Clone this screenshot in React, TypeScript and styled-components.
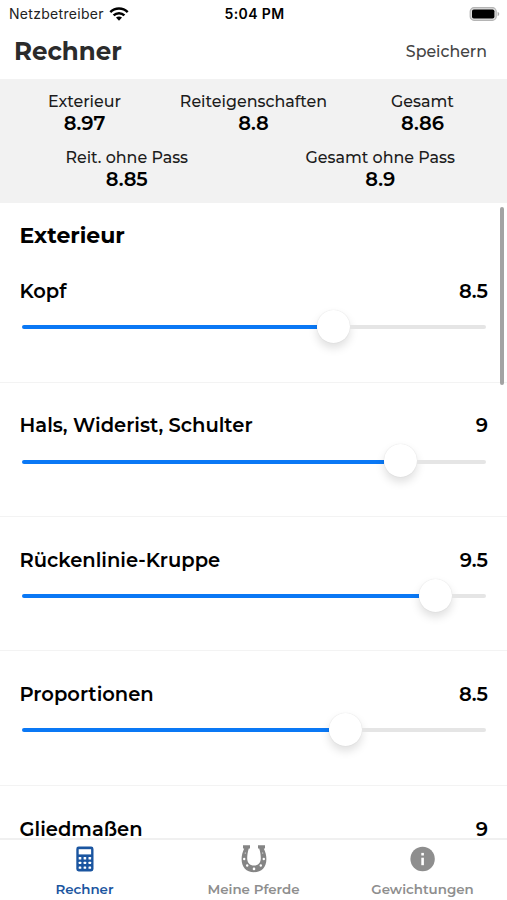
import React from 'react';
import styled, { createGlobalStyle } from 'styled-components';

const GlobalStyle = createGlobalStyle`
  * { box-sizing: border-box; }
  body {
    margin: 0;
    background: #fff;
    color: #000;
    font-family: Montserrat, Inter, sans-serif;
  }
`;

const Screen = styled.div`
  display: flex;
  flex-direction: column;
  width: 507px;
  height: 900px;
  overflow: hidden;
  background: #fff;
`;

const StatusBar = styled.div`
  display: grid;
  grid-template-columns: 1fr auto 1fr;
  align-items: center;
  flex: none;
  height: 27px;
  padding: 0 7px 0 9px;
  font-family: Inter, sans-serif;
  font-size: 14px;
`;

const Carrier = styled.div`
  display: flex;
  align-items: center;
  gap: 5px;
  color: #222;
  letter-spacing: 0.3px;
`;

const Clock = styled.div`
  font-weight: 600;
  letter-spacing: 0.4px;
`;

const BatterySlot = styled.div`
  display: flex;
  justify-content: flex-end;
`;

const Header = styled.header`
  display: flex;
  align-items: center;
  justify-content: space-between;
  flex: none;
  height: 52px;
  padding: 0 20px 5px 14px;
`;

const Title = styled.h1`
  margin: 0;
  font-size: 24.5px;
  font-weight: 700;
  line-height: 30px;
  color: #2b2b2b;
`;

const SaveButton = styled.button`
  padding: 3px 0 0;
  border: 0;
  background: none;
  font: 500 15.8px/20px Montserrat, Inter, sans-serif;
  color: #444;
`;

const Summary = styled.section`
  display: flex;
  flex-direction: column;
  flex: none;
  gap: 13px;
  height: 124px;
  padding-top: 13px;
  background: #f2f2f2;
`;

const SummaryRow = styled.div`
  display: flex;
`;

const Score = styled.div`
  flex: 1 1 0;
  text-align: center;
`;

const ScoreLabel = styled.div`
  font-size: 15.9px;
  font-weight: 500;
  line-height: 20px;
  color: #1c1c1c;
  white-space: nowrap;
`;

const ScoreValue = styled.div`
  font-size: 19.5px;
  font-weight: 600;
  line-height: 23px;
`;

const ScrollArea = styled.main`
  position: relative;
  flex: 1;
  min-height: 0;
  overflow: hidden;
`;

const ScrollThumb = styled.div`
  position: absolute;
  top: 4px;
  right: 3px;
  width: 4px;
  height: 178px;
  border-radius: 2px;
  background: #a3a3a3;
`;

const SectionTitle = styled.h2`
  margin: 0;
  height: 45.3px;
  padding: 19px 19.5px 0;
  font-size: 22px;
  font-weight: 700;
  line-height: 28px;
`;

const Criterion = styled.div`
  height: 134.4px;
  padding: 30.7px 19px 0 19.5px;
  border-bottom: 1px solid #f3f3f3;
`;

const CriterionHead = styled.div`
  display: flex;
  justify-content: space-between;
  font-size: 19.5px;
  font-weight: 600;
  line-height: 24px;
`;

const Slider = styled.div`
  display: flex;
  align-items: center;
  height: 34px;
  margin: 7.3px 2px 0 2.5px;
`;

const TrackFill = styled.div`
  height: 4px;
  border-radius: 2px 0 0 2px;
  background: #0a78f5;
`;

const TrackRest = styled.div`
  flex: 1;
  height: 4px;
  border-radius: 0 2px 2px 0;
  background: #e5e5e5;
`;

const Knob = styled.div`
  flex: none;
  width: 33px;
  height: 33px;
  margin-bottom: 2px;
  border-radius: 50%;
  background: #fff;
  box-shadow: 0 0 1px rgba(0, 0, 0, 0.15), 0 5px 10px rgba(0, 0, 0, 0.13);
`;

const TabBar = styled.nav`
  display: flex;
  flex: none;
  height: 62px;
  border-top: 2px solid #f0f0f0;
  background: #fff;
`;

const Tab = styled.div<{ $active?: boolean }>`
  display: flex;
  flex: 1 1 0;
  flex-direction: column;
  align-items: center;
  gap: 7px;
  padding-top: 4px;
  font-size: 13.4px;
  font-weight: 600;
  line-height: 16px;
  color: ${(p) => (p.$active ? '#1a55a0' : '#8e8e8e')};
`;

const WifiIcon = () => (
  <svg width="20" height="14" viewBox="0 0 20 14" fill="none" stroke="#000" strokeWidth="2.5">
    <path d="M1.3 5.1C6.2.4 13.8.4 18.7 5.1" />
    <path d="M4.6 8.4c3-2.9 7.8-2.9 10.8 0" />
    <path d="M10 13.7 7 10.6c1.7-1.6 4.3-1.6 6 0z" fill="#000" stroke="none" />
  </svg>
);

const BatteryIcon = () => (
  <svg width="31" height="14" viewBox="0 0 31 14">
    <rect x="1.2" y="0.7" width="26" height="12.6" rx="3.8" fill="#ddd" stroke="#b4b4b4" strokeWidth="1.2" />
    <rect x="3" y="2.4" width="22.4" height="9.2" rx="1.8" fill="#000" />
    <path d="M28.6 4.8c2.2.8 2.2 3.6 0 4.4z" fill="#aaa" />
  </svg>
);

const CalculatorIcon = () => (
  <svg width="30" height="30" viewBox="0 0 30 30">
    <rect x="6.3" y="2.5" width="17.2" height="25" rx="2.4" fill="#1a55a0" />
    <g fill="#fff">
      <rect x="8.7" y="5.2" width="12.4" height="5.2" />
      <rect x="8.7" y="13" width="2.6" height="2.4" rx="0.5" />
      <rect x="13.6" y="13" width="2.6" height="2.4" rx="0.5" />
      <rect x="18.5" y="13" width="2.6" height="2.4" rx="0.5" />
      <rect x="8.7" y="17.7" width="2.6" height="2.4" rx="0.5" />
      <rect x="13.6" y="17.7" width="2.6" height="2.4" rx="0.5" />
      <rect x="18.5" y="17.7" width="2.6" height="2.4" rx="0.5" />
      <rect x="8.7" y="22.4" width="2.6" height="2.4" rx="0.5" />
      <rect x="13.6" y="22.4" width="2.6" height="2.4" rx="0.5" />
      <rect x="18.5" y="22.4" width="2.6" height="2.4" rx="0.5" />
    </g>
  </svg>
);

const HorseshoeIcon = () => (
  <svg width="30" height="30" viewBox="0 0 30 30">
    <path
      d="M4 1.2h7v3.2H9.800C8.700 7.800 8.200 11 8.200 14.200c0 4.500 2.500 7.300 6.800 7.300s6.800-2.800 6.800-7.300c0-3.200-.5-6.400-1.600-9.800H19V1.200h7v3.200h-1.200c1.700 3.700 2.600 7.100 2.600 10.500C27.400 23 22.700 28.200 15 28.200S2.600 23 2.600 14.900c0-3.400.9-6.800 2.600-10.500H4z"
      fill="#858585"
    />
    <g fill="#fff">
      <circle cx="6.3" cy="9" r="0.6" />
      <circle cx="5.2" cy="15" r="1.2" />
      <circle cx="8.2" cy="21.500" r="1.200" />
      <circle cx="15" cy="24.900" r="1.300" />
      <circle cx="21.800" cy="21.500" r="1.200" />
      <circle cx="24.800" cy="15" r="1.200" />
      <circle cx="23.700" cy="9" r="0.600" />
    </g>
  </svg>
);

const InfoIcon = () => (
  <svg width="30" height="30" viewBox="0 0 30 30">
    <circle cx="14.6" cy="15" r="12.2" fill="#8e8e8e" />
    <rect x="13.3" y="8.9" width="2.6" height="2.6" fill="#fff" />
    <rect x="13.3" y="13.7" width="2.6" height="7.5" fill="#fff" />
  </svg>
);

const scoreRows = [
  [
    { label: 'Exterieur', value: '8.97' },
    { label: 'Reiteigenschaften', value: '8.8' },
    { label: 'Gesamt', value: '8.86' },
  ],
  [
    { label: 'Reit. ohne Pass', value: '8.85' },
    { label: 'Gesamt ohne Pass', value: '8.9' },
  ],
];

const criteria = [
  { name: 'Kopf', value: '8.5', fill: 294.5 },
  { name: 'Hals, Widerist, Schulter', value: '9', fill: 361.5 },
  { name: 'Rückenlinie-Kruppe', value: '9.5', fill: 397 },
  { name: 'Proportionen', value: '8.5', fill: 306.5 },
  { name: 'Gliedmaßen', value: '9', fill: 361.5 },
];

export default function App() {
  return (
    <Screen>
      <GlobalStyle />
      <StatusBar>
        <Carrier>
          Netzbetreiber <WifiIcon />
        </Carrier>
        <Clock>5:04 PM</Clock>
        <BatterySlot>
          <BatteryIcon />
        </BatterySlot>
      </StatusBar>
      <Header>
        <Title>Rechner</Title>
        <SaveButton>Speichern</SaveButton>
      </Header>
      <Summary>
        {scoreRows.map((row, i) => (
          <SummaryRow key={i}>
            {row.map((s) => (
              <Score key={s.label}>
                <ScoreLabel>{s.label}</ScoreLabel>
                <ScoreValue>{s.value}</ScoreValue>
              </Score>
            ))}
          </SummaryRow>
        ))}
      </Summary>
      <ScrollArea>
        <SectionTitle>Exterieur</SectionTitle>
        {criteria.map((c) => (
          <Criterion key={c.name}>
            <CriterionHead>
              <span>{c.name}</span>
              <span>{c.value}</span>
            </CriterionHead>
            <Slider>
              <TrackFill style={{ width: c.fill }} />
              <Knob />
              <TrackRest />
            </Slider>
          </Criterion>
        ))}
        <ScrollThumb />
      </ScrollArea>
      <TabBar>
        <Tab $active>
          <CalculatorIcon />
          Rechner
        </Tab>
        <Tab>
          <HorseshoeIcon />
          Meine Pferde
        </Tab>
        <Tab>
          <InfoIcon />
          Gewichtungen
        </Tab>
      </TabBar>
    </Screen>
  );
}
